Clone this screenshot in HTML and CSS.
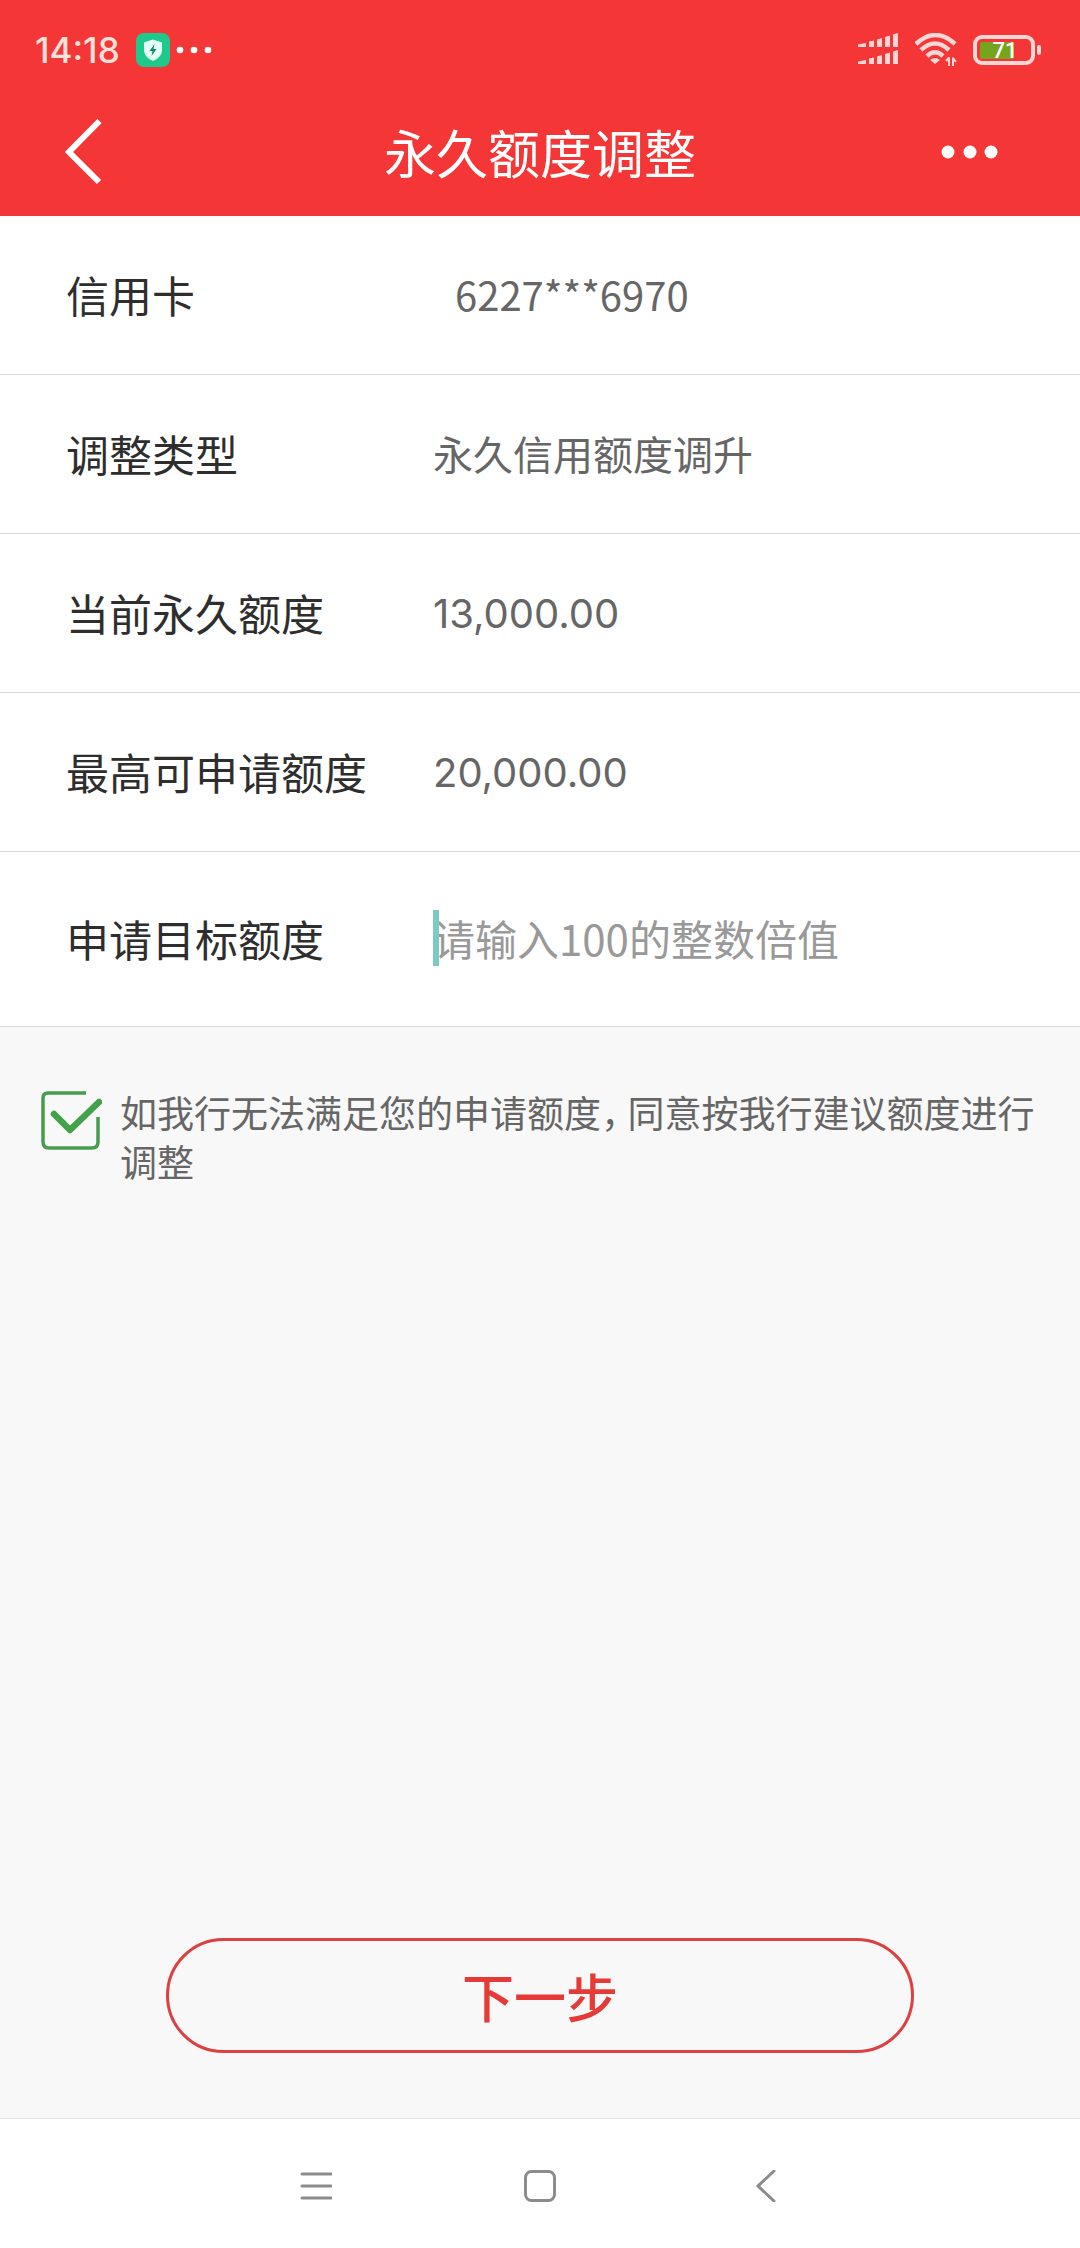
FILE: index.html
```
<!DOCTYPE html>
<html lang="zh-CN">
<head>
<meta charset="utf-8">
<meta name="viewport" content="width=device-width, initial-scale=1">
<title>永久额度调整</title>
<link rel="stylesheet" href="styles.css">
</head>
<body>
<div class="screen">
  <header class="top">
    <div class="status">
      <div class="status-left">
        <span class="clock">14:18</span>
        <svg class="shield" width="34" height="34" viewBox="0 0 34 34" aria-hidden="true">
          <rect width="34" height="34" rx="8" fill="#1dc98b"/>
          <path d="M17 6.500 L26 9.500 V17 C26 22 22.500 25.500 17 28 C11.500 25.500 8 22 8 17 V9.500 Z" fill="#e4fff5"/>
          <path d="M18.500 11 L13.500 18 H16.500 L15.500 23 L20.500 16 H17.500 Z" fill="#128a62"/>
        </svg>
        <svg class="dots" width="36" height="8" viewBox="0 0 36 8" aria-hidden="true">
          <circle cx="4" cy="4" r="3.300"/><circle cx="18" cy="4" r="3.300"/><circle cx="32" cy="4" r="3.300"/>
        </svg>
      </div>
      <div class="status-right">
        <svg class="signal" width="42" height="34" viewBox="0 0 42 34" aria-hidden="true">
          <path id="bars" d="M1 11.500 L9 10 V14 H1 Z M12 8.500 L17 7.500 V14 H12 Z M20 6.500 L25 5 V14 H20 Z M28 4 L33 2.500 V14 H28 Z M36 1.500 L41 0 V14 H36 Z"/>
          <use href="#bars" y="17"/>
        </svg>
        <svg class="wifi" width="42" height="34" viewBox="2 0 42 34" aria-hidden="true">
          <g fill="none" stroke="#ffd6d6" stroke-width="4.500">
            <path d="M3 11 Q22.500 -7 42 11"/>
            <path d="M8 17 Q22 4 36 17"/>
            <path d="M14 23 Q22 15.500 30 23"/>
          </g>
          <path d="M17 27 Q22 23 27 27 L22 31 Z"/>
          <path d="M36 24 V33 M33 28 L36 24.500 M40 33 V24.500 M43 29 L40 25" fill="none" stroke="#ffd6d6" stroke-width="2"/>
        </svg>
        <svg class="battery" width="68" height="30" viewBox="0 0 68 30" role="img" aria-label="71%">
          <rect x="2" y="2" width="58" height="26" rx="7" fill="none" stroke="#ffd6d6" stroke-width="4"/>
          <rect x="7" y="7" width="34" height="17" rx="2" fill="#74a51c"/>
          <rect x="64" y="10" width="4" height="10" rx="2"/>
          <text x="32" y="23" text-anchor="middle" class="charge">71</text>
        </svg>
      </div>
    </div>
    <div class="titlebar">
      <button class="icon-btn back" type="button" aria-label="返回">
        <svg width="40" height="68" viewBox="0 0 40 68"><path d="M34.500 3 L4 34 L34 64" fill="none" stroke="#fff" stroke-width="6"/></svg>
      </button>
      <h1 class="title">永久额度调整</h1>
      <button class="icon-btn more" type="button" aria-label="更多">
        <svg width="58" height="14" viewBox="0 0 58 14" fill="#fff"><circle cx="7" cy="7" r="6.500"/><circle cx="29" cy="7" r="6.500"/><circle cx="50" cy="7" r="6.500"/></svg>
      </button>
    </div>
  </header>

  <form class="form">
    <dl class="rows">
      <div class="row"><dt class="label">信用卡</dt><dd class="value card">6227***6970</dd></div>
      <div class="row"><dt class="label">调整类型</dt><dd class="value">永久信用额度调升</dd></div>
      <div class="row"><dt class="label">当前永久额度</dt><dd class="value amount">13,000.00</dd></div>
      <div class="row"><dt class="label">最高可申请额度</dt><dd class="value amount">20,000.00</dd></div>
    </dl>
    <div class="row row-input">
      <label class="label" for="target">申请目标额度</label>
      <div class="field">
        <input class="input" id="target" type="text" inputmode="numeric" placeholder="请输入100的整数倍值">
        <span class="caret"></span>
      </div>
    </div>
    <div class="agree">
      <input class="check" id="agree" type="checkbox" checked>
      <label class="agree-text" for="agree"><svg class="tick" width="62" height="60" viewBox="0 0 62 60" fill="none" stroke="#479c50" aria-hidden="true">
          <path d="M46 2 H8 Q3 2 3 7 V51 Q3 57 9 57 H52 Q58 57 58 51 V26" stroke-width="3.500"/>
          <path d="M14 23 L30 39 L59 11" stroke="#43a04b" stroke-width="6.500" stroke-linecap="round" stroke-linejoin="round"/>
        </svg><span>如我行无法满足您的申请额度<span class="comma">，</span>同意按我行建议额度进行调整</span></label>
    </div>
    <div class="actions">
      <button class="next" type="button">下一步</button>
    </div>
  </form>

  <nav class="navbar" aria-label="系统导航">
    <button class="icon-btn" type="button" aria-label="最近任务">
      <svg width="32" height="32" viewBox="0 0 32 32"><path d="M2 4 H31 M2 16 H31 M2 28 H31"/></svg>
    </button>
    <button class="icon-btn" type="button" aria-label="主页">
      <svg width="32" height="32" viewBox="0 0 32 32"><rect x="1.500" y="1.500" width="29" height="29" rx="6"/></svg>
    </button>
    <button class="icon-btn" type="button" aria-label="后退">
      <svg width="32" height="32" viewBox="0 0 32 32"><path d="M26 1 L10 16 L26 31"/></svg>
    </button>
  </nav>
</div>
</body>
</html>
```
FILE: styles.css
```
* {
  box-sizing: border-box;
}

body {
  margin: 0;
  font-family: "Noto Sans CJK SC", sans-serif;
  background: #f8f8f8;
  color: #2e2e2e;
}

button,
input {
  font-family: inherit;
}

.screen {
  display: flex;
  flex-direction: column;
  min-height: 100vh;
}

/* header */
.top {
  padding-bottom: 16px;
  background: #f53636;
}

.status {
  display: flex;
  justify-content: space-between;
  align-items: center;
  height: 100px;
  padding: 0 39px 0 35px;
  fill: #ffd6d6;
}

.status-left,
.status-right {
  display: flex;
  align-items: center;
}

.clock {
  color: #ffe0dc;
  font-family: Inter, sans-serif;
  font-size: 35px;
  font-weight: 500;
  line-height: 40px;
}

.shield {
  margin-left: 16px;
}

.dots {
  margin-left: 6px;
  fill: #fff;
}

.status-right {
  gap: 16px;
}

.charge {
  fill: #fff;
  font-family: Roboto, sans-serif;
  font-size: 22px;
  font-weight: 500;
}

.titlebar {
  display: grid;
  grid-template-columns: 1fr auto 1fr;
  align-items: center;
  height: 100px;
  padding: 4px 65px 0;
}

.icon-btn {
  display: flex;
  padding: 0;
  border: 0;
  background: none;
}

.more {
  justify-self: end;
  margin-right: 16px;
}

.title {
  margin: 0;
  color: #fff;
  font-size: 52px;
  font-weight: 400;
  line-height: 76px;
}

/* form */
.form {
  display: flex;
  flex: 1;
  flex-direction: column;
}

.rows {
  margin: 0;
}

.row {
  display: grid;
  grid-template-columns: 367px 1fr;
  align-items: center;
  min-height: 159px;
  padding: 0 66px 3px;
  border-bottom: 1px solid #d9d9d9;
  background: #fff;
}

.row-input {
  min-height: 175px;
}

.label {
  font-size: 43px;
  line-height: 60px;
}

.value {
  margin: 0;
  color: #666;
  font-size: 40px;
  line-height: 60px;
}

.card {
  padding-left: 22px;
}

.amount {
  padding-top: 4px;
  font-family: Inter, sans-serif;
}

.field {
  position: relative;
}

.input {
  display: block;
  width: 100%;
  height: 60px;
  padding: 0;
  border: 0;
  outline: 0;
  background: none;
  color: #666;
  font-size: 42px;
}

.input::placeholder {
  color: #999;
  opacity: 1;
}

.caret {
  position: absolute;
  top: 2px;
  left: 0;
  width: 6px;
  height: 56px;
  background: #7ccbc2;
}

.agree {
  position: relative;
  padding: 61px 32px 0 40px;
}

.check {
  position: absolute;
  width: 60px;
  height: 60px;
  margin: 0;
  opacity: 0;
}

.agree-text {
  display: flex;
  align-items: flex-start;
  gap: 18px;
  color: #666;
  font-size: 37px;
  line-height: 49px;
}

.tick {
  flex: none;
  margin-top: 3px;
}

.comma {
  margin-right: 8px;
  font-feature-settings: "halt";
}

.actions {
  margin-top: auto;
  padding: 0 166px 65px;
}

.next {
  display: block;
  width: 100%;
  height: 115px;
  border: 3px solid #dd4040;
  border-radius: 58px;
  background: none;
  color: #e53a36;
  font-size: 52px;
  font-weight: 500;
}

/* system navigation */
.navbar {
  display: flex;
  justify-content: center;
  align-items: center;
  gap: 192px;
  height: 130px;
  border-top: 1px solid #e4e4e4;
  padding-top: 5px;
  background: #fff;
  fill: none;
  stroke: #8c8c8c;
  stroke-width: 3;
  stroke-linecap: round;
}
```
